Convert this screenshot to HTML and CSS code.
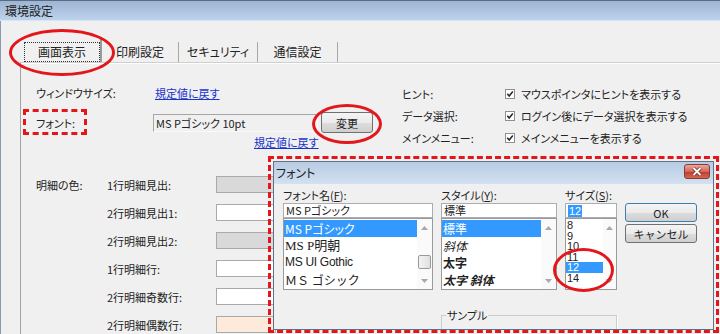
FILE: index.html
```html
<!DOCTYPE html>
<html lang="ja">
<head>
  <meta charset="UTF-8" />
  <title>環境設定</title>
  <link rel="stylesheet" href="styles.css">
</head>
<body>
<div class="window">
  <div class="titlebar">環境設定</div>

  <div class="tabs">
    <div class="tab active"><span class="focus">画面表示</span></div>
    <div class="tab tab-print">印刷設定</div>
    <div class="tab tab-security">セキュリティ</div>
    <div class="tab tab-comm">通信設定</div>
  </div>

  <div class="panel">
    <div class="top-area">
      <div class="left-col">
        <div class="row row-size">
          <span class="label">ウィンドウサイズ:</span>
          <a class="link" href="#">規定値に戻す</a>
        </div>
        <div class="row row-font">
          <span class="label">フォント:</span>
          <div class="font-box">MS Pゴシック 10pt</div>
          <button class="btn btn-change">変更</button>
        </div>
        <div class="row row-reset">
          <a class="link" href="#">規定値に戻す</a>
        </div>
      </div>

      <div class="right-col">
        <div class="check-row">
          <span class="label">ヒント:</span>
          <span class="check"><svg width="10" height="10" viewBox="0 0 10 10"><rect x="0.5" y="0.5" width="9" height="9" fill="#fff" stroke="#8e8f8f"/><path d="M2.3 4.8 L4.2 7 L7.8 2.6" fill="none" stroke="#2a2a2a" stroke-width="1.6"/></svg></span>
          <span>マウスポインタにヒントを表示する</span>
        </div>
        <div class="check-row">
          <span class="label">データ選択:</span>
          <span class="check"><svg width="10" height="10" viewBox="0 0 10 10"><rect x="0.5" y="0.5" width="9" height="9" fill="#fff" stroke="#8e8f8f"/><path d="M2.3 4.8 L4.2 7 L7.8 2.6" fill="none" stroke="#2a2a2a" stroke-width="1.6"/></svg></span>
          <span>ログイン後にデータ選択を表示する</span>
        </div>
        <div class="check-row">
          <span class="label">メインメニュー:</span>
          <span class="check"><svg width="10" height="10" viewBox="0 0 10 10"><rect x="0.5" y="0.5" width="9" height="9" fill="#fff" stroke="#8e8f8f"/><path d="M2.3 4.8 L4.2 7 L7.8 2.6" fill="none" stroke="#2a2a2a" stroke-width="1.6"/></svg></span>
          <span>メインメニューを表示する</span>
        </div>
      </div>
    </div>

    <div class="colors">
      <span class="color-title">明細の色:</span>
      <span class="color-label">1行明細見出:</span><span class="swatch gray"></span>
      <span class="color-label">2行明細見出1:</span><span class="swatch"></span>
      <span class="color-label">2行明細見出2:</span><span class="swatch gray"></span>
      <span class="color-label">1行明細行:</span><span class="swatch"></span>
      <span class="color-label">2行明細奇数行:</span><span class="swatch"></span>
      <span class="color-label">2行明細偶数行:</span><span class="swatch peach"></span>
    </div>
  </div>

  <div class="dialog">
    <div class="dlg-title">
      フォント
      <span class="close"><svg width="26" height="15" viewBox="0 0 26 15"><path d="M9.5 4 L16.5 11 M16.5 4 L9.5 11" stroke="#7a2a22" stroke-width="3.4"/><path d="M9.5 4 L16.5 11 M16.5 4 L9.5 11" stroke="#fff" stroke-width="1.8"/></svg></span>
    </div>
    <div class="dlg-body">
      <span class="dlg-label">フォント名(<u>F</u>):</span>
      <span class="dlg-label">スタイル(<u>Y</u>):</span>
      <span class="dlg-label">サイズ(<u>S</u>):</span>
      <span></span>

      <div class="field">MS Pゴシック</div>
      <div class="field">標準</div>
      <div class="field"><span class="sel-text">12</span></div>
      <div class="buttons">
        <button class="btn btn-dlg btn-ok">OK</button>
        <button class="btn btn-dlg">キャンセル</button>
      </div>

      <div class="list font-list">
        <div class="items">
          <div class="item selected">MS Pゴシック</div>
          <div class="item serif">MS P明朝</div>
          <div class="item latin">MS UI Gothic</div>
          <div class="item mono">ＭＳ ゴシック</div>
        </div>
        <div class="sb">
          <div class="arrow"><svg width="7" height="4" viewBox="0 0 7 4"><path d="M0 4 L3.5 0 L7 4Z" fill="#a8a8a8"/></svg></div>
          <div class="track"><div class="thumb"></div></div>
          <div class="arrow"><svg width="7" height="4" viewBox="0 0 7 4"><path d="M0 0 L3.5 4 L7 0Z" fill="#a8a8a8"/></svg></div>
        </div>
      </div>

      <div class="list style-list">
        <div class="items">
          <div class="item selected">標準</div>
          <div class="item italic">斜体</div>
          <div class="item bold">太字</div>
          <div class="item bold italic">太字 斜体</div>
        </div>
        <div class="sb">
          <div class="arrow"><svg width="7" height="4" viewBox="0 0 7 4"><path d="M0 4 L3.5 0 L7 4Z" fill="#a8a8a8"/></svg></div>
          <div class="track"></div>
          <div class="arrow"><svg width="7" height="4" viewBox="0 0 7 4"><path d="M0 0 L3.5 4 L7 0Z" fill="#a8a8a8"/></svg></div>
        </div>
      </div>

      <div class="list size-list">
        <div class="items">
          <div class="item">8</div>
          <div class="item">9</div>
          <div class="item">10</div>
          <div class="item">11</div>
          <div class="item selected">12</div>
          <div class="item">14</div>
        </div>
        <div class="sb">
          <div class="arrow"><svg width="7" height="4" viewBox="0 0 7 4"><path d="M0 4 L3.5 0 L7 4Z" fill="#a8a8a8"/></svg></div>
          <div class="track"></div>
          <div class="arrow"><svg width="7" height="4" viewBox="0 0 7 4"><path d="M0 0 L3.5 4 L7 0Z" fill="#a8a8a8"/></svg></div>
        </div>
      </div>

      <fieldset class="sample">
        <legend>サンプル</legend>
      </fieldset>
    </div>
  </div>

  <!-- red annotation marks -->
  <div class="mark ring ring-tab"></div>
  <div class="mark ring ring-change"></div>
  <div class="mark ring ring-size"></div>
  <div class="mark dash dash-font"></div>
  <div class="mark dash dash-dialog"></div>
</div>
</body>
</html>
```

FILE: styles.css
```css
* {
  box-sizing: border-box;
}

body {
  margin: 0;
  background: #f0f0f0;
  font-family: "Noto Sans CJK JP", "Noto Sans", sans-serif;
  font-size: 11px;
  color: #222;
  font-feature-settings: "palt";
}

.window {
  position: relative;
  width: 720px;
  height: 334px;
  overflow: hidden;
  background: #f0f0f0;
  box-shadow: inset 1px 0 #8a9ab0;
}

.titlebar {
  height: 21px;
  line-height: 19px;
  padding-left: 5px;
  font-size: 12px;
  background: linear-gradient(#9db5d4, #bdd2eb);
  border-top: 1px solid #5b6b80;
  border-bottom: 1px solid #d8e5f3;
}

/* tabs */
.tabs {
  display: flex;
  align-items: flex-end;
  height: 25px;
  margin-top: 16px;
  padding-left: 22px;
  font-size: 12px;
}

.tab {
  height: 20px;
  line-height: 20px;
  text-align: center;
  border-right: 1px solid #a7a7a7;
}

.tab.active {
  width: 80px;
  height: 25px;
  padding: 5px 0 0 2px;
  border-right: 2px solid #9a9a9a;
}

.focus {
  display: block;
  height: 20px;
  line-height: 18px;
  border: 1px dotted #333;
}

.tab-print { width: 77px; }
.tab-security { width: 79px; }
.tab-comm { width: 80px; }

/* main panel */
.panel {
  height: 272px;
  margin-left: 20px;
  padding-left: 15px;
  border-top: 1px solid #cfcfcf;
  border-left: 1px solid #a3a3a3;
  box-shadow: inset 0 1px #fff;
}

.top-area {
  display: flex;
  padding-top: 20px;
}

.left-col {
  width: 366px;
}

.row {
  display: flex;
  align-items: center;
}

.label {
  width: 117px;
  flex-shrink: 0;
}

.row-size {
  height: 20px;
}

.row-size .link {
  margin-left: 2px;
}

.row-font {
  height: 21px;
  margin-top: 9px;
}

.font-box {
  width: 165px;
  height: 18px;
  line-height: 16px;
  padding-left: 2px;
  border-top: 1px solid #a5a5a5;
  border-left: 1px solid #a5a5a5;
  border-right: 1px solid #fafafa;
  border-bottom: 1px solid #fafafa;
}

.btn {
  font-family: inherit;
  font-size: 11px;
  color: #222;
  padding: 0;
  border: 1px solid #707070;
  border-radius: 3px;
  background: linear-gradient(#f4f4f4, #ebebeb 50%, #dddddd 51%, #cfcfcf);
}

.btn-change {
  width: 52px;
  height: 21px;
  margin-left: 3px;
}

.row-reset {
  height: 14px;
  margin-top: 2px;
  padding-left: 218px;
}

.link {
  color: #1a33cc;
  text-decoration: underline;
  line-height: 14px;
}

.right-col .label {
  width: 103px;
}

.check-row {
  display: flex;
  align-items: center;
  height: 22px;
}

.check {
  display: flex;
  width: 10px;
  height: 10px;
  margin-right: 6px;
}

/* detail colours */
.colors {
  display: grid;
  grid-template-columns: 71px 109px 60px;
  grid-auto-rows: 17px;
  row-gap: 11px;
  align-items: center;
  margin-top: 27px;
}

.color-title {
  grid-column: 1;
  grid-row: 1;
}

.color-label {
  grid-column: 2;
}

.swatch {
  grid-column: 3;
  height: 17px;
  border: 1px solid #a9a9a9;
  background: #fff;
}

.swatch.gray { background: #d9d9d9; }
.swatch.peach { background: #fdeadb; }

/* font dialog */
.dialog {
  position: absolute;
  left: 273px;
  top: 161px;
  width: 441px;
  height: 169px;
  overflow: hidden;
  background: #f0f0f0;
  border: 1px solid #5f7189;
}

.dlg-title {
  position: relative;
  height: 22px;
  line-height: 22px;
  padding-left: 2px;
  font-size: 12px;
  background: linear-gradient(#b7cbe3, #d3e1f1);
}

.close {
  position: absolute;
  right: 3px;
  top: 2px;
  display: flex;
  width: 26px;
  height: 15px;
  border: 1px solid #8a3a32;
  border-radius: 3px;
  background: linear-gradient(#e9a99b, #d2675a 50%, #c0392c 51%, #d06a50);
}

.close svg {
  margin: -1px;
}

.dlg-body {
  display: grid;
  grid-template-columns: 150px 116px 52px 72px;
  grid-template-rows: 15px 15px 72px;
  column-gap: 8px;
  padding: 4px 0 0 9px;
}

.dlg-label {
  line-height: 14px;
}

.field {
  height: 15px;
  line-height: 13px;
  padding-left: 2px;
  background: #fff;
  border: 1px solid #abadb3;
  white-space: nowrap;
}

.sel-text {
  background: #3399ff;
  color: #fff;
  padding: 0 1px;
  font-family: "Liberation Sans", sans-serif;
}

.buttons {
  grid-column: 4;
  grid-row: 2 / span 2;
  display: flex;
  flex-direction: column;
  gap: 2px;
}

.btn-dlg {
  height: 19px;
  width: 72px;
}

.btn-ok {
  border-color: #3c7fb1;
}

.list {
  display: flex;
  height: 72px;
  background: #fff;
  border: 1px solid #9a9a9a;
}

.items {
  flex: 1;
  padding-top: 1px;
  overflow: hidden;
}

.item {
  height: 17px;
  line-height: 17px;
  padding-left: 1px;
  white-space: nowrap;
}

.item.selected {
  background: #3399ff;
  color: #fff;
}

.font-list .item {
  font-size: 12px;
}

.font-list .serif {
  font-family: "Liberation Serif", "Noto Sans CJK JP", serif;
  font-size: 13px;
}

.font-list .latin {
  font-family: "Liberation Sans", sans-serif;
  letter-spacing: -0.3px;
}

.font-list .mono {
  font-feature-settings: normal;
}

.style-list .item {
  font-size: 12px;
}

.item.italic { font-style: italic; }
.item.bold { font-weight: bold; }

.size-list .item {
  height: 10.6px;
  line-height: 10.6px;
  font-family: "Liberation Sans", sans-serif;
  font-size: 11px;
}

.sb {
  display: flex;
  flex-direction: column;
  width: 15px;
  background: #fafafa;
}

.size-list .sb {
  width: 13px;
}

.arrow {
  display: flex;
  align-items: center;
  justify-content: center;
  height: 17px;
}

.track {
  flex: 1;
}

.thumb {
  height: 14px;
  margin: 19px 1px 0;
  border: 1px solid #9a9a9a;
  border-radius: 2px;
  background: linear-gradient(90deg, #f3f3f3, #e0e0e0);
}

.sample {
  grid-column: 2 / span 2;
  height: 30px;
  margin: 19px 0 0;
  padding: 0 0 0 4px;
  border: 1px solid #cdcdcd;
  box-shadow: 1px 1px #fff;
}

.sample legend {
  padding: 0 1px;
  line-height: 12px;
}

/* red annotation marks */
.mark {
  position: absolute;
  pointer-events: none;
}

.ring {
  border: 3px solid #e3161b;
  border-radius: 50%;
}

.dash {
  border: 3px dashed #e3161b;
}

.ring-tab {
  left: 9px;
  top: 29px;
  width: 106px;
  height: 47px;
}

.ring-change {
  left: 312px;
  top: 104px;
  width: 70px;
  height: 40px;
}

.ring-size {
  left: 553px;
  top: 248px;
  width: 61px;
  height: 44px;
}

.dash-font {
  left: 23px;
  top: 109px;
  width: 64px;
  height: 26px;
}

.dash-dialog {
  left: 268px;
  top: 156px;
  width: 451px;
  height: 177px;
}
```
